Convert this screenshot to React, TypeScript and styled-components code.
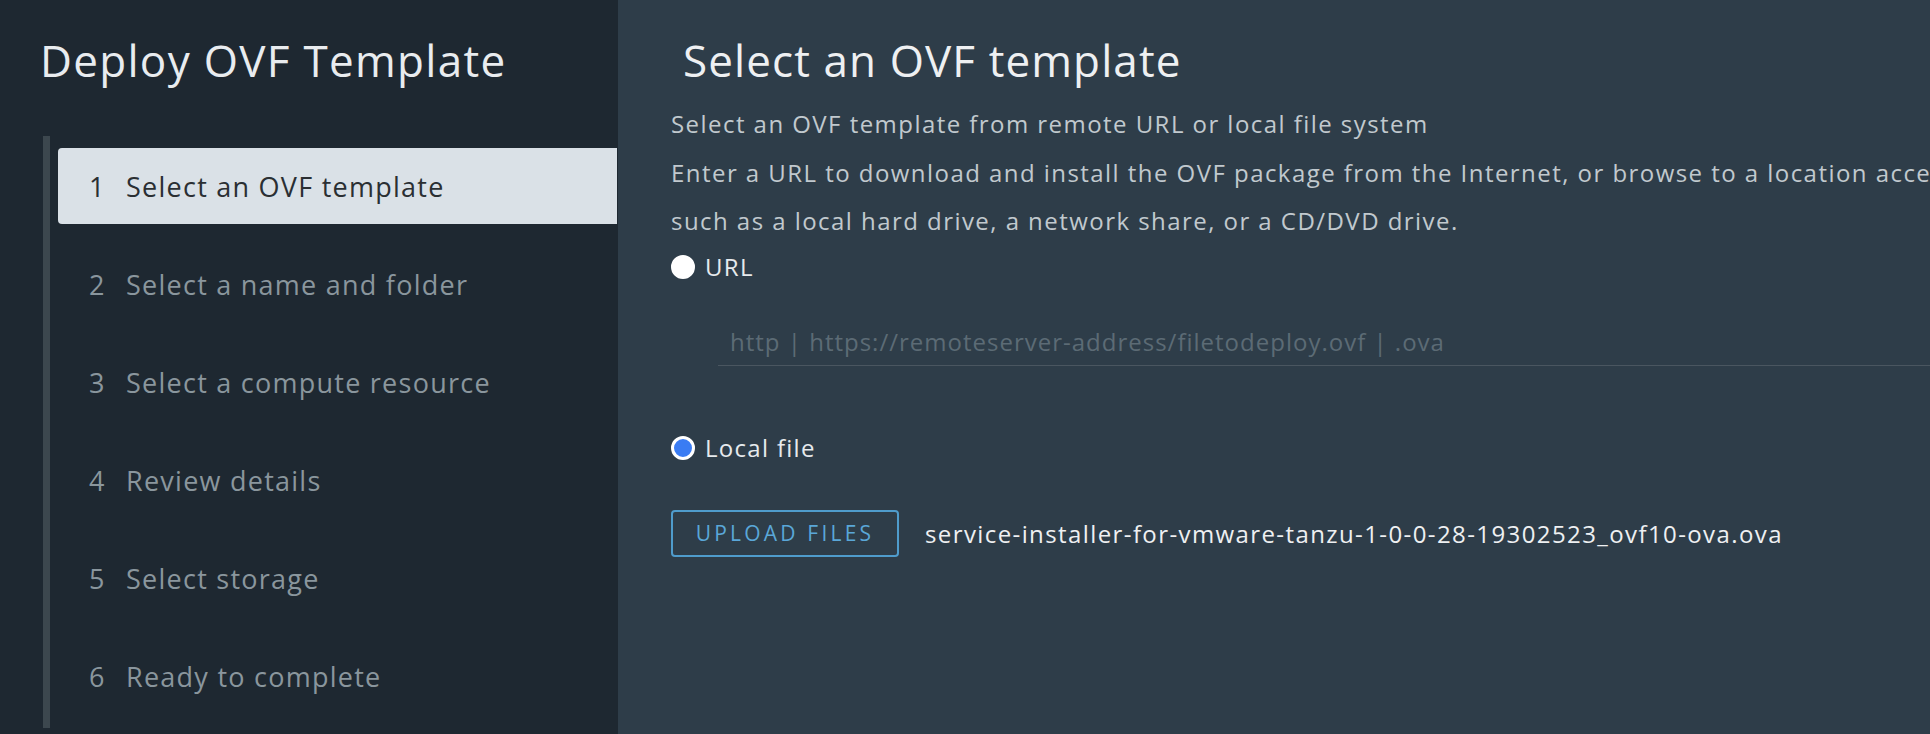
import styled, { createGlobalStyle } from "styled-components";

const GlobalStyle = createGlobalStyle`
  html, body {
    margin: 0;
    padding: 0;
    height: 100%;
    overflow: hidden;
    background: #2e3d49;
  }
  body {
    font-family: "Open Sans", "Noto Sans", sans-serif;
  }
  #root {
    height: 100%;
  }
`;

const steps = [
  "Select an OVF template",
  "Select a name and folder",
  "Select a compute resource",
  "Review details",
  "Select storage",
  "Ready to complete",
];

export default function App() {
  return (
    <>
      <GlobalStyle />
      <Wizard>
        <Sidebar>
          <WizardTitle>Deploy OVF Template</WizardTitle>
          <StepList>
            {steps.map((label, i) => (
              <Step key={label} active={i === 0}>
                <StepNumber>{i + 1}</StepNumber>
                <span>{label}</span>
              </Step>
            ))}
          </StepList>
        </Sidebar>

        <Content>
          <PageTitle>Select an OVF template</PageTitle>
          <Description>
            Select an OVF template from remote URL or local file system
            <br />
            Enter a URL to download and install the OVF package from the Internet, or browse to a location
            accessible from your computer,
            <br />
            such as a local hard drive, a network share, or a CD/DVD drive.
          </Description>

          <RadioRow>
            <Radio checked={false} />
            <RadioLabel>URL</RadioLabel>
          </RadioRow>
          <UrlInput placeholder="http | https://remoteserver-address/filetodeploy.ovf | .ova" />

          <RadioRow spaced>
            <Radio checked />
            <RadioLabel>Local file</RadioLabel>
          </RadioRow>

          <UploadRow>
            <UploadButton>UPLOAD FILES</UploadButton>
            <FileName>service-installer-for-vmware-tanzu-1-0-0-28-19302523_ovf10-ova.ova</FileName>
          </UploadRow>
        </Content>
      </Wizard>
    </>
  );
}

const Wizard = styled.div`
  display: flex;
  height: 100%;
  min-height: 734px;
`;

const Sidebar = styled.aside`
  flex: 0 0 618px;
  background: #1e2831;
  padding-top: 34px;
  box-sizing: border-box;
`;

const WizardTitle = styled.h1`
  margin: 0 0 50px 40px;
  font-size: 44px;
  line-height: 52px;
  font-weight: 400;
  letter-spacing: 1.3px;
  color: #e9ecef;
  white-space: nowrap;
`;

const StepList = styled.ol`
  list-style: none;
  margin: 0 1px 0 43px;
  padding: 12px 0 14px 8px;
  border-left: 7px solid #3c474e;
  display: flex;
  flex-direction: column;
  gap: 22px;
`;

const Step = styled.li<{ active?: boolean }>`
  display: flex;
  align-items: center;
  height: 76px;
  padding-left: 31px;
  border-radius: 4px 0 0 4px;
  font-size: 27px;
  letter-spacing: 1.25px;
  color: ${(p) => (p.active ? "#2a2f33" : "#8a969d")};
  background: ${(p) => (p.active ? "#dae1e7" : "transparent")};
  white-space: nowrap;
`;

const StepNumber = styled.span`
  width: 37px;
`;

const Content = styled.main`
  flex: 1;
  min-width: 0;
  overflow: hidden;
  padding: 34px 0 0 53px;
  display: flex;
  flex-direction: column;
  align-items: flex-start;
`;

const PageTitle = styled.h2`
  margin: 0 0 14px 12px;
  font-size: 44px;
  line-height: 52px;
  font-weight: 400;
  letter-spacing: 1.1px;
  color: #eef0f2;
  white-space: nowrap;
`;

const Description = styled.p`
  margin: 0;
  font-size: 24px;
  line-height: 48.5px;
  letter-spacing: 1.45px;
  color: #c1c9ce;
  white-space: nowrap;
`;

const RadioRow = styled.label<{ spaced?: boolean }>`
  display: flex;
  align-items: center;
  gap: 10px;
  height: 30px;
  margin-top: ${(p) => (p.spaced ? "67px" : "6px")};
`;

const Radio = styled.span<{ checked: boolean }>`
  width: 24px;
  height: 24px;
  box-sizing: border-box;
  border-radius: 50%;
  border: 3px solid #ffffff;
  background: ${(p) => (p.checked ? "#3a7cf3" : "#ffffff")};
`;

const RadioLabel = styled.span`
  font-size: 24px;
  font-weight: 500;
  letter-spacing: 1.3px;
  color: #e6eaed;
`;

const UrlInput = styled.input`
  align-self: stretch;
  margin: 40px 0 0 47px;
  height: 44px;
  box-sizing: border-box;
  padding: 0 0 4px 12px;
  border: none;
  border-bottom: 1px solid #4a5660;
  background: transparent;
  font-family: inherit;
  font-size: 24px;
  letter-spacing: 1px;
  color: #e6eaed;
  outline: none;
  &::placeholder {
    color: #5c6b75;
  }
`;

const UploadRow = styled.div`
  display: flex;
  align-items: center;
  gap: 26px;
  margin-top: 47px;
`;

const UploadButton = styled.button`
  height: 47px;
  width: 228px;
  box-sizing: border-box;
  padding: 0;
  border: 2px solid #4f9ccc;
  border-radius: 4px;
  background: transparent;
  color: #5aa7d8;
  font-family: inherit;
  font-size: 21px;
  font-weight: 500;
  letter-spacing: 3.2px;
`;

const FileName = styled.span`
  font-size: 24px;
  font-weight: 500;
  letter-spacing: 1.4px;
  color: #eef0f2;
  white-space: nowrap;
`;
